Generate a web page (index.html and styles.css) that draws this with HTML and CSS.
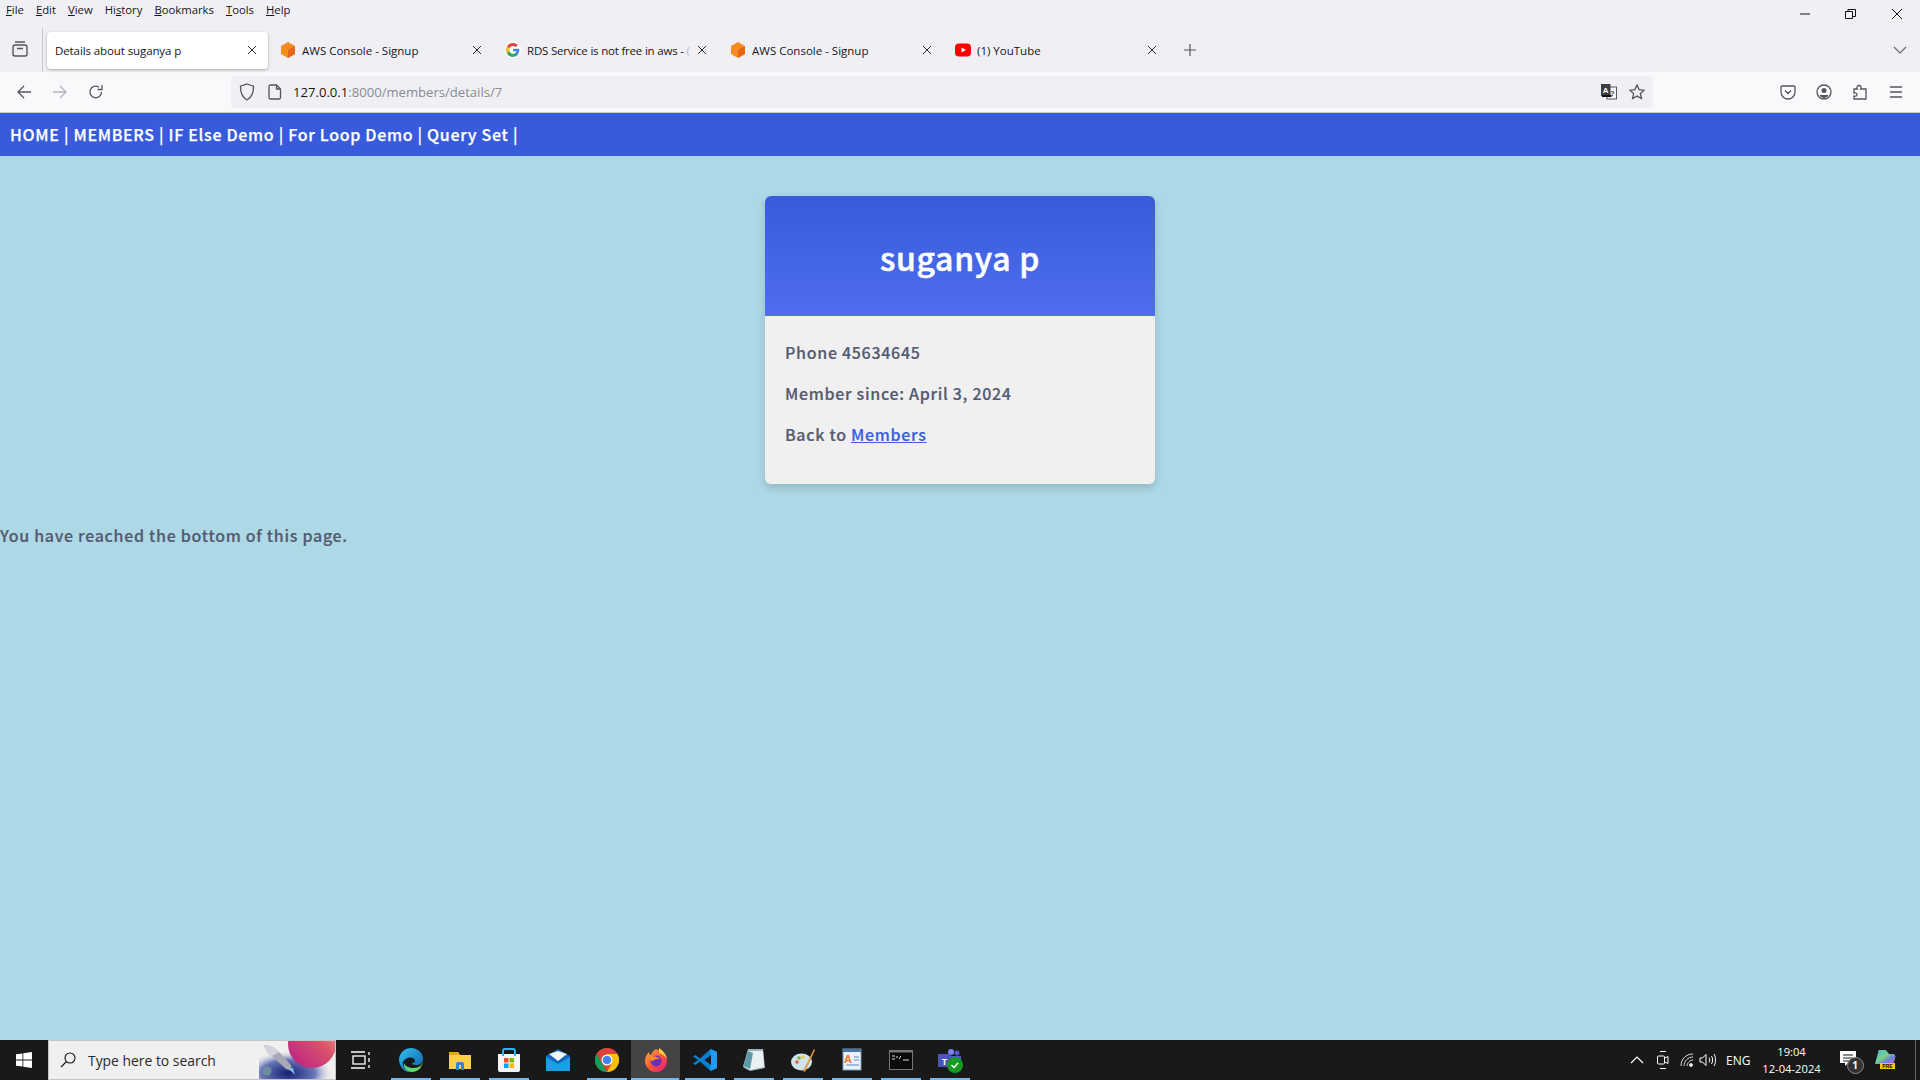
FILE: index.html
```html
<!DOCTYPE html>
<html lang="en">
<head>
<meta charset="utf-8">
<title>Details about suganya p</title>
<link rel="stylesheet" href="styles.css">
</head>
<body>
<div class="window">
  <header class="chrome">
    <div class="menubar">
      <nav class="menus">
        <span><u>F</u>ile</span><span><u>E</u>dit</span><span><u>V</u>iew</span><span>Hi<u>s</u>tory</span><span><u>B</u>ookmarks</span><span><u>T</u>ools</span><span><u>H</u>elp</span>
      </nav>
      <div class="winctl">
        <svg width="12" height="12" viewBox="0 0 12 12"><path d="M1 6h10" stroke="#111" fill="none"/></svg>
        <svg width="12" height="12" viewBox="0 0 12 12"><path d="M.5 3.5h7v7h-7zM3 3.5V1.500h7.500v7H8" stroke="#111" fill="none"/></svg>
        <svg width="12" height="12" viewBox="0 0 12 12"><path d="M1 1l10 10M11 1L1 11" stroke="#111" fill="none"/></svg>
      </div>
    </div>
    <div class="tabstrip">
      <div class="tablist-btn">
        <svg width="18" height="18" viewBox="0 0 18 18" fill="none" stroke="#55555f" stroke-width="1.400"><rect x="2" y="5" width="14" height="11" rx="2"/><path d="M4 2h10M6 8.500h6"/></svg>
      </div>
      <div class="tab active"><span class="tab-title">Details about suganya p</span><svg class="close" width="10" height="10" viewBox="0 0 10 10"><path d="M1 1l8 8M9 1L1 9" stroke="#2a2a32" fill="none"/></svg></div>
      <div class="tab">
        <svg class="fav" width="16" height="16" viewBox="0 0 16 16"><path d="M8 0l7 4v8l-7 4-7-4V4z" fill="#f68b1f"/><path d="M8 8l7-4v8l-7 4z" fill="#e5661a"/></svg>
        <span class="tab-title">AWS Console - Signup</span><svg class="close" width="10" height="10" viewBox="0 0 10 10"><path d="M1 1l8 8M9 1L1 9" stroke="#2a2a32" fill="none"/></svg></div>
      <div class="tab">
        <svg class="fav" width="16" height="16" viewBox="0 0 48 48"><circle cx="24" cy="24" r="24" fill="#fff"/><path d="M43 20H24v8h11c-1.600 5-6 8-11 8-6.600 0-12-5.400-12-12s5.400-12 12-12c3 0 5.800 1.100 7.900 3l6-6C34.400 5.800 29.500 4 24 4 13 4 4 13 4 24s9 20 20 20 19-9 19-20c0-1.300-.1-2.700 0-4z" fill="#4285f4"/><path d="M6 13l7 5c2-4 6-6 11-6 3 0 5.800 1.100 7.900 3l6-6C34.400 5.800 29.500 4 24 4 16 4 9.500 7 6 13z" fill="#ea4335"/><path d="M24 44c5 0 10-2 13.500-5l-6.500-5.500c-2 1.500-4.300 2.500-7 2.500-5 0-9.500-3-11-8l-7 5.400C9 40 16 44 24 44z" fill="#34a853"/><path d="M6 13c-3 6-3 16 0 20.500l7-5.500c-1-2.500-1-6 0-10z" fill="#fbbc05"/></svg>
        <span class="tab-title tight">RDS Service is not free in aws - <span class="faded">(</span></span><svg class="close" width="10" height="10" viewBox="0 0 10 10"><path d="M1 1l8 8M9 1L1 9" stroke="#2a2a32" fill="none"/></svg></div>
      <div class="tab">
        <svg class="fav" width="16" height="16" viewBox="0 0 16 16"><path d="M8 0l7 4v8l-7 4-7-4V4z" fill="#f68b1f"/><path d="M8 8l7-4v8l-7 4z" fill="#e5661a"/></svg>
        <span class="tab-title">AWS Console - Signup</span><svg class="close" width="10" height="10" viewBox="0 0 10 10"><path d="M1 1l8 8M9 1L1 9" stroke="#2a2a32" fill="none"/></svg></div>
      <div class="tab">
        <svg class="fav" width="16" height="16" viewBox="0 0 16 16"><rect y="1.500" width="16" height="13" rx="4" fill="#f00"/><path d="M6.500 5.500v5L11 8z" fill="#fff"/></svg>
        <span class="tab-title">(1) YouTube</span><svg class="close" width="10" height="10" viewBox="0 0 10 10"><path d="M1 1l8 8M9 1L1 9" stroke="#2a2a32" fill="none"/></svg></div>
      <div class="newtab"><svg width="14" height="14" viewBox="0 0 14 14"><path d="M7 1v12M1 7h12" stroke="#55555f" stroke-width="1.200" fill="none"/></svg></div>
      <div class="tabs-more"><svg width="14" height="8" viewBox="0 0 14 8"><path d="M1 1l6 6 6-6" stroke="#66666f" stroke-width="1.200" fill="none"/></svg></div>
    </div>
    <div class="toolbar">
      <div class="tb-btn"><svg width="16" height="16" viewBox="0 0 16 16" fill="none" stroke="#55555f" stroke-width="1.300"><path d="M15 8H2M8 2L2 8l6 6"/></svg></div>
      <div class="tb-btn"><svg width="16" height="16" viewBox="0 0 16 16" fill="none" stroke="#b4b4ba" stroke-width="1.300"><path d="M1 8h13M8 2l6 6-6 6"/></svg></div>
      <div class="tb-btn"><svg width="16" height="16" viewBox="0 0 16 16" fill="none" stroke="#55555f" stroke-width="1.300"><path d="M13.500 8A5.800 5.800 0 1 1 11 3.200M14 1v4.500H9.500"/></svg></div>
      <div class="urlbar">
        <svg class="shield" width="16" height="18" viewBox="0 0 16 18" fill="none" stroke="#55555f" stroke-width="1.300"><path d="M8 1l6.500 2.200c.2 6-1.500 10.800-6.500 13.800C3 14 1.300 9.200 1.500 3.200z"/></svg>
        <svg class="doc" width="14" height="16" viewBox="0 0 14 16" fill="none" stroke="#55555f" stroke-width="1.300"><path d="M2.500 1h6l4 4v8.500a1.500 1.500 0 0 1-1.500 1.500H2.500A1.500 1.500 0 0 1 1 13.500v-11A1.500 1.500 0 0 1 2.500 1zM8.500 1v4h4"/></svg>
        <span class="url"><span class="host">127.0.0.1</span>:8000/members/details/7</span>
        <div class="url-end">
          <svg width="16" height="16" viewBox="0 0 16 16"><rect x="6" y="3" width="9.500" height="12" fill="#f6f6f8" stroke="#55555f"/><path d="M0 0h9.500v12H0z" fill="#3d3d45"/><rect x="1" y="11" width="9.500" height="2" fill="#111"/><text x="4.700" y="8.500" class="tr-a">A</text><text x="11.500" y="12" class="tr-b">?</text></svg>
          <svg width="16" height="16" viewBox="0 0 16 16" fill="none" stroke="#55555f" stroke-width="1.300"><path d="M8 1l2.100 4.600 5 .6-3.700 3.400 1 5L8 12.100l-4.400 2.500 1-5L.9 6.200l5-.6z"/></svg>
        </div>
      </div>
      <div class="tb-right">
        <svg width="16" height="16" viewBox="0 0 16 16" fill="none" stroke="#55555f" stroke-width="1.300"><path d="M2 2h12a1 1 0 0 1 1 1v5a7 7 0 0 1-14 0V3a1 1 0 0 1 1-1zM5 6.500l3 3 3-3"/></svg>
        <svg width="16" height="16" viewBox="0 0 16 16"><circle cx="8" cy="8" r="7" fill="none" stroke="#55555f" stroke-width="1.300"/><circle cx="8" cy="6.500" r="2.500" fill="#55555f"/><path d="M3.500 11h9c-1 2-2.500 3-4.500 3s-3.500-1-4.500-3z" fill="#55555f"/></svg>
        <svg width="16" height="16" viewBox="0 0 16 16" fill="none" stroke="#55555f" stroke-width="1.300"><path d="M7 1.500c1.700 0 2.600 1.500 1.700 3.500H14v10H2v-3c2 .6 3-.5 3-1.500S4 8.500 2 9V5h3.300C4.400 3 5.300 1.500 7 1.500z"/></svg>
        <svg width="16" height="16" viewBox="0 0 16 16" fill="none" stroke="#55555f" stroke-width="1.300"><path d="M2 3h12M2 8h12M2 13h12"/></svg>
      </div>
    </div>
  </header>

  <nav class="sitenav">
    <a>HOME</a> | <a>MEMBERS</a> | <a>IF Else Demo</a> | <a>For Loop Demo</a> | <a>Query Set</a> |
  </nav>

  <main class="page">
    <section class="card">
      <div class="card-head"><h1>suganya p</h1></div>
      <div class="card-body">
        <p>Phone 45634645</p>
        <p>Member since: April 3, 2024</p>
        <p>Back to <a class="link">Members</a></p>
      </div>
    </section>
    <p class="bottom-note">You have reached the bottom of this page.</p>
  </main>

  <footer class="taskbar">
    <div class="start"><svg width="16" height="16" viewBox="0 0 16 16" fill="#fff"><path d="M0 2.300l6.500-.9v6.200H0zM7.300 1.300L16 0v7.600H7.300zM0 8.400h6.500v6.200L0 13.700zM7.300 8.400H16V16l-8.700-1.200z"/></svg></div>
    <div class="search">
      <svg class="lens" width="16" height="16" viewBox="0 0 16 16" fill="none" stroke="#111" stroke-width="1.100"><circle cx="10" cy="6" r="5"/><path d="M6.500 9.500L1 15"/></svg>
      <span class="search-text">Type here to search</span>
      <svg class="search-art" width="76" height="38" viewBox="0 0 76 38">
        <defs>
          <radialGradient id="sky" cx=".38" cy=".85" r=".6"><stop offset="0" stop-color="#141f70"/><stop offset=".6" stop-color="#6a78b8"/><stop offset="1" stop-color="#f0f0f0" stop-opacity="0"/></radialGradient>
          <linearGradient id="planet" x1="0" y1="1" x2="1" y2="0"><stop offset="0" stop-color="#b91a86"/><stop offset=".6" stop-color="#d9546c"/><stop offset="1" stop-color="#eeb08a"/></linearGradient>
        </defs>
        <rect width="76" height="38" fill="url(#sky)"/>
        <circle cx="53" cy="3" r="24" fill="url(#planet)"/>
        <path d="M5 4c6 0 11 3 15 7l12 13 1 6-6-2-14-13C9 12 6 9 5 4z" fill="#a9a7b8"/>
        <path d="M5 4c6 0 11 3 15 7l-9 5C9 12 6 9 5 4z" fill="#d4d3dc"/>
        <path d="M30 28l6 6-2-7z" fill="#6ec4f2"/>
        <circle cx="8" cy="30" r="4.500" fill="#6a8e9e"/>
      </svg>
    </div>
    <div class="slot first"><svg width="20" height="18" viewBox="0 0 20 18" fill="none" stroke="#fff" stroke-width="1.300"><rect x="2" y="5" width="12" height="8"/><path d="M0 1h14M0 17h14M18 1v3M18 7v4M18 14v3"/></svg></div>
    <div class="slot open"><svg width="24" height="24" viewBox="0 0 24 24"><defs><linearGradient id="edge" x1="0" y1="0" x2="1" y2="1"><stop offset="0" stop-color="#35c1f1"/><stop offset="1" stop-color="#0b5ea8"/></linearGradient><linearGradient id="edge2" x1="0" y1="0" x2="1" y2="1"><stop offset="0" stop-color="#2fd0b0"/><stop offset="1" stop-color="#7ee04a"/></linearGradient></defs><path d="M0 11C1 4 6 0 12 0c7 0 12 5 12 11 0 4-3 6-7 6-3 0-4-1-4-2 3 0 4-2 2-4-3-3-9-1-11 3-1 4 2 9 8 10C5 25 0 18 0 11z" fill="url(#edge)"/><path d="M24 12c0 7-5 12-11 12-5 0-9-4-8-9 1 3 5 5 10 5 5 0 9-3 9-8z" fill="url(#edge2)"/></svg></div>
    <div class="slot open"><svg width="24" height="20" viewBox="0 0 24 20"><path d="M1 2h9l2 3h11v14H1z" fill="#fbcf4d"/><path d="M1 2h9l2 3H1z" fill="#e5a823"/><path d="M8 20v-6a2 2 0 0 1 2-2h4a2 2 0 0 1 2 2v6h-3v-5h-2v5z" fill="#2b87d0"/></svg></div>
    <div class="slot open"><svg width="24" height="24" viewBox="0 0 24 24"><path d="M1 6h22v16a2 2 0 0 1-2 2H3a2 2 0 0 1-2-2z" fill="#f5f5f5"/><path d="M6 8V3a2 2 0 0 1 2-2h8a2 2 0 0 1 2 2v5" fill="none" stroke="#25b6f0" stroke-width="2"/><path d="M7 10h4.500v4.500H7z" fill="#f25022"/><path d="M12.500 10H17v4.500h-4.500z" fill="#7fba00"/><path d="M7 15.500h4.500V20H7z" fill="#00a4ef"/><path d="M12.500 15.500H17V20h-4.500z" fill="#ffb900"/></svg></div>
    <div class="slot"><svg width="24" height="24" viewBox="0 0 24 24"><path d="M0 8l12-7 12 7v15H0z" fill="#0e67bb"/><path d="M3 6l9-3 9 3-9 7z" fill="#f2f6fa"/><path d="M0 9l12 7 12-7v14H0z" fill="#16a0e8"/></svg></div>
    <div class="slot open"><svg width="24" height="24" viewBox="0 0 24 24"><circle cx="12" cy="12" r="12" fill="#db4437"/><path d="M12 12L1.600 6A12 12 0 0 1 22.400 6z" fill="#db4437"/><path d="M12 24A12 12 0 0 1 1.600 6L8 17z" fill="#0f9d58"/><path d="M12 24A12 12 0 0 0 22.400 6H12l4 11z" fill="#f4c20d"/><circle cx="12" cy="12" r="5.500" fill="#fff"/><circle cx="12" cy="12" r="4.300" fill="#4285f4"/></svg></div>
    <div class="slot open current"><svg width="24" height="24" viewBox="0 0 24 24"><defs><linearGradient id="fx" x1="0" y1="0" x2="1" y2="1"><stop offset="0" stop-color="#ffb02e"/><stop offset=".55" stop-color="#ff4f3a"/><stop offset="1" stop-color="#e31587"/></linearGradient></defs><path d="M12 1c6 3 11 5 11 12a11 11 0 1 1-22 0C1 9 3 6 5 4c0 2 1 3 2 3 1-3 3-5 5-6z" fill="url(#fx)"/><path d="M15 0c3 2 7 5 8 11-2-3-5-5-8-6z" fill="#ffc93c"/><circle cx="12" cy="13" r="5.500" fill="#6b2fb8"/><path d="M5 10c3-3 8-2 11 1-3 0-6 0-7 2-2 0-3-1-4-3z" fill="#ff8a2a"/></svg></div>
    <div class="slot open"><svg width="24" height="24" viewBox="0 0 24 24"><path d="M17.500 1L24 4v16l-6.500 3L7 13.500 2.500 17 0 15.500 5 12 0 8.500 2.500 7 7 10.500z" fill="#0a7fcd"/><path d="M17.500 1L24 4v16l-6.500 3z" fill="#1f9cf0"/><path d="M18 7l-6.500 5 6.500 5z" fill="#191919"/></svg></div>
    <div class="slot open"><svg width="24" height="24" viewBox="0 0 24 24"><path d="M6 1h15l2 19-15 3-7-4z" fill="#9fb6bd"/><path d="M6 3h15l1 16-14 3-6-3z" fill="#e9f1f3"/><path d="M6 3L1 18l7 3 3-16z" fill="#5f9aa8"/></svg></div>
    <div class="slot open"><svg width="24" height="24" viewBox="0 0 24 24"><ellipse cx="10.500" cy="14" rx="10.500" ry="8.500" fill="#cfe3ef"/><circle cx="6" cy="14" r="1.800" fill="#e55c4b"/><circle cx="8" cy="10" r="1.800" fill="#7ab648"/><circle cx="12" cy="9" r="1.800" fill="#f4c542"/><path d="M23 1l-11 22 2 1L24 2z" fill="#e79a3d"/></svg></div>
    <div class="slot open"><svg width="24" height="24" viewBox="0 0 24 24"><rect x="3" y="1" width="18" height="21" fill="#eaf1f8" stroke="#7d9cbf"/><path d="M3 1h18v3H3z" fill="#4c76a6"/><text x="8" y="15" class="wp-a">A</text><path d="M14 9h5M14 12h5M6 17h13" stroke="#5a8ac2"/></svg></div>
    <div class="slot open"><svg width="24" height="20" viewBox="0 0 24 20"><rect x=".5" y=".5" width="23" height="19" fill="#0a0a0a" stroke="#777"/><path d="M.5.500h23v2H.5z" fill="#777"/><path d="M3 6h3M3 9h3M7 7h2M10 9l2-3M14 10h6" stroke="#ddd"/></svg></div>
    <div class="slot open"><svg width="26" height="26" viewBox="0 0 26 26"><circle cx="14" cy="5" r="3" fill="#7b83eb"/><circle cx="20" cy="6" r="2.500" fill="#5059c9"/><path d="M9 9h15v9H9z" fill="#5059c9"/><rect x="1" y="7" width="13" height="13" rx="1" fill="#4b53bc"/><text x="7.500" y="17.500" class="tm-t">T</text><circle cx="18" cy="18" r="8" fill="#139b22"/><path d="M14.500 18l2.500 2.500 4-4.500" fill="none" stroke="#fff" stroke-width="1.500"/></svg></div>
    <div class="tray">
      <svg class="t-chev" width="14" height="8" viewBox="0 0 14 8"><path d="M1 7l6-6 6 6" fill="none" stroke="#fff" stroke-width="1.200"/></svg>
      <svg class="t-cam" width="12" height="20" viewBox="0 0 12 20" fill="none" stroke="#fff"><path d="M3 1.500h6M3 18.500h6"/><rect x=".5" y="6" width="7" height="8" rx="1"/><path d="M8 8l3-1.500v7L8 12"/></svg>
      <svg class="t-wifi" width="14" height="14" viewBox="0 0 14 14" fill="none" stroke="#ddd"><path d="M1 13C1 6 6 1 13 1M4 13c0-5 4-9 9-9M7 13c0-3 3-6 6-6"/><circle cx="11" cy="12" r="1.500" fill="#fff"/></svg>
      <svg class="t-vol" width="17" height="14" viewBox="0 0 17 14" fill="none" stroke="#fff"><path d="M1 5h2.500L7 1.500v11L3.500 9H1zM10 4.500c1 1.500 1 3.500 0 5M12.500 3c1.500 2.500 1.500 5.500 0 8M15 1c2 3 2 9 0 12"/></svg>
      <span class="t-lang">ENG</span>
      <div class="t-clock"><span>19:04</span><span>12-04-2024</span></div>
      <div class="t-notif">
        <svg width="18" height="18" viewBox="0 0 18 18"><path d="M1 1h16v12H9l-3 3v-3H1z" fill="#fff"/><path d="M4 5h10M4 8h10M4 11h6" stroke="#1a1a1a"/></svg>
        <span class="badge">1</span>
      </div>
      <svg class="t-copilot" width="22" height="22" viewBox="0 0 22 22"><defs><linearGradient id="cp" x1="0" y1="0" x2="1" y2="1"><stop offset="0" stop-color="#3fb8e8"/><stop offset=".45" stop-color="#7ad08a"/><stop offset=".7" stop-color="#6b7ee8"/><stop offset="1" stop-color="#e66ccc"/></linearGradient></defs><path d="M5 1h7l3 4h4c2 0 3 2 2 5l-2 5H1l3-11c0-1 .5-3 1-3z" fill="url(#cp)"/><rect x="6" y="14" width="15" height="6" fill="#f7c600"/><text x="13.500" y="19" class="cp-t">PRE</text></svg>
      <div class="t-desk"></div>
    </div>
  </footer>
</div>
</body>
</html>
```
FILE: styles.css
```css
* { box-sizing: border-box; }
html, body { margin: 0; height: 100%; }
body { font-family: "Noto Sans CJK JP", "Noto Sans", sans-serif; overflow: hidden; }
svg { display: block; flex: none; }

.window { display: flex; flex-direction: column; height: 1080px; background: #add8e6; }

.chrome { background: #f0f0f4; font-family: "Open Sans", "Noto Sans", sans-serif; color: #15141a; }

.menubar { height: 27px; display: flex; justify-content: space-between; }
.menus { display: flex; gap: 12px; padding: 2px 0 0 6px; font-size: 11.300px; line-height: 16px; }
.winctl { display: flex; gap: 34px; padding: 8px 17px 0 0; }

.tabstrip { height: 45px; padding-top: 1px; display: flex; align-items: center; }
.tablist-btn { width: 43px; height: 44px; padding: 12px 0 0 11px; border-right: 1px solid #c8c8cc; }
.tab { width: 221px; height: 37px; margin: 0 4px 0 0; padding: 0 11px 0 8px; display: flex; align-items: center; border-radius: 4px; font-size: 11.500px; }
.tablist-btn + .tab { margin-left: 4px; }
.tab.active { background: #fff; box-shadow: 0 1px 3px rgba(0, 0, 0, .3); letter-spacing: -.1px; }
.fav { margin-right: 6px; }
.tab-title { flex: 1; white-space: nowrap; overflow: hidden; }
.tab-title.tight { letter-spacing: -.2px; }
.faded { color: #c0c0c6; }
.close { margin-left: 1px; }
.newtab { margin-left: 11px; }
.tabs-more { margin-left: auto; padding-right: 13px; }

.toolbar { height: 41px; padding: 4px 0 5px 0; background: #f9f9fb; border-bottom: 1px solid #ccc; display: flex; align-items: center; }
.toolbar .tb-btn { width: 36px; display: flex; justify-content: center; }
.toolbar .tb-btn:first-child { margin-left: 6px; }
.urlbar { width: 1422px; height: 32px; margin-left: 117px; padding: 0 8px 0 8px; background: #f0f0f4; border-radius: 4px; display: flex; align-items: center; }
.doc { margin-left: 13px; }
.url { margin-left: 11px; font-size: 13.100px; color: #8a8a90; }
.host { color: #15141a; }
.url-end { margin-left: auto; display: flex; gap: 12px; }
.tb-right { margin-left: 127px; display: flex; gap: 20px; }
.tr-a { font: bold 8px "Liberation Sans", sans-serif; fill: #fff; text-anchor: middle; }
.tr-b { font: bold 7px "Liberation Sans", sans-serif; fill: #3d3d45; text-anchor: middle; }

.sitenav { height: 43px; background: #385bdc; color: #fff; font-size: 16px; font-weight: 500; -webkit-text-stroke: .25px #fff; line-height: 42px; padding-left: 10px; letter-spacing: .7px; white-space: nowrap; }

.page { flex: 1; color: #555a70; font-weight: 500; -webkit-text-stroke: .2px; font-size: 16px; letter-spacing: .7px; }
.card { width: 390px; margin: 40px auto 0; border-radius: 6px; background: #f0f0f0; box-shadow: 0 4px 8px rgba(0, 0, 0, .15); overflow: hidden; height: 288px; }
.card-head { height: 120px; background: linear-gradient(#385adb, #4e6eef); display: flex; justify-content: center; align-items: center; }
.card-head h1 { margin: 0; padding-top: 2px; color: #fff; font-size: 32px; font-weight: 500; -webkit-text-stroke: .5px #fff; line-height: 1.2; }
.card-body { padding: 23px 20px 0; }
.card-body p { margin: 0 0 15px; line-height: 26px; }
.link { color: #3a5fe0; text-decoration: underline; }
.bottom-note { margin: 38px 0 0; line-height: 26px; }

.taskbar { height: 40px; background: #191919; display: flex; align-items: stretch; font-family: "Open Sans", "Noto Sans", sans-serif; }
.start { width: 48px; display: flex; align-items: center; justify-content: center; }
.search { width: 288px; background: #f0f0f0; border: 1px solid #c4c4c4; display: flex; align-items: center; padding-left: 11px; position: relative; }
.search-text { margin-left: 12px; font-size: 13.900px; color: #2a2a2a; }
.search-art { position: absolute; right: 0; top: 0; }
.lens { flex: none; }
.slot { width: 49px; display: flex; align-items: center; justify-content: center; position: relative; }
.slot.first { width: 50px; }
.slot.open::after { content: ""; position: absolute; left: 4.500px; right: 4.500px; bottom: 0; height: 2px; background: #76b9ed; }
.slot.current { background: #444; }
.slot.current::after { left: 0; right: 1px; }
.tm-t { font: bold 9px "Liberation Sans", sans-serif; fill: #fff; text-anchor: middle; }
.wp-a { font: bold 11px "Liberation Sans", sans-serif; fill: #e8742c; text-anchor: middle; }
.cp-t { font: bold 5px "Liberation Sans", sans-serif; fill: #111; text-anchor: middle; }

.tray { margin-left: auto; display: flex; align-items: center; color: #fff; }
.t-chev { margin-right: 12.500px; }
.t-cam { margin-right: 11.500px; }
.t-wifi { margin-right: 5px; }
.t-vol { margin-right: 10px; }
.t-lang { font-size: 12px; width: 24px; margin-right: 11.500px; }
.t-clock { width: 60px; display: flex; flex-direction: column; align-items: center; font-size: 11.200px; line-height: 17px; margin-right: 17px; }
.t-notif { position: relative; width: 28px; height: 28px; padding-top: 4px; margin-right: 7.500px; }
.badge { position: absolute; left: 8px; top: 11px; width: 17px; height: 17px; border-radius: 50%; background: #333; border: 1px solid #888; color: #fff; font-size: 10px; font-weight: 700; line-height: 15px; text-align: center; }
.t-copilot { margin-right: 19px; }
.t-desk { width: 1px; height: 40px; background: #666; margin-right: 4px; }
```
